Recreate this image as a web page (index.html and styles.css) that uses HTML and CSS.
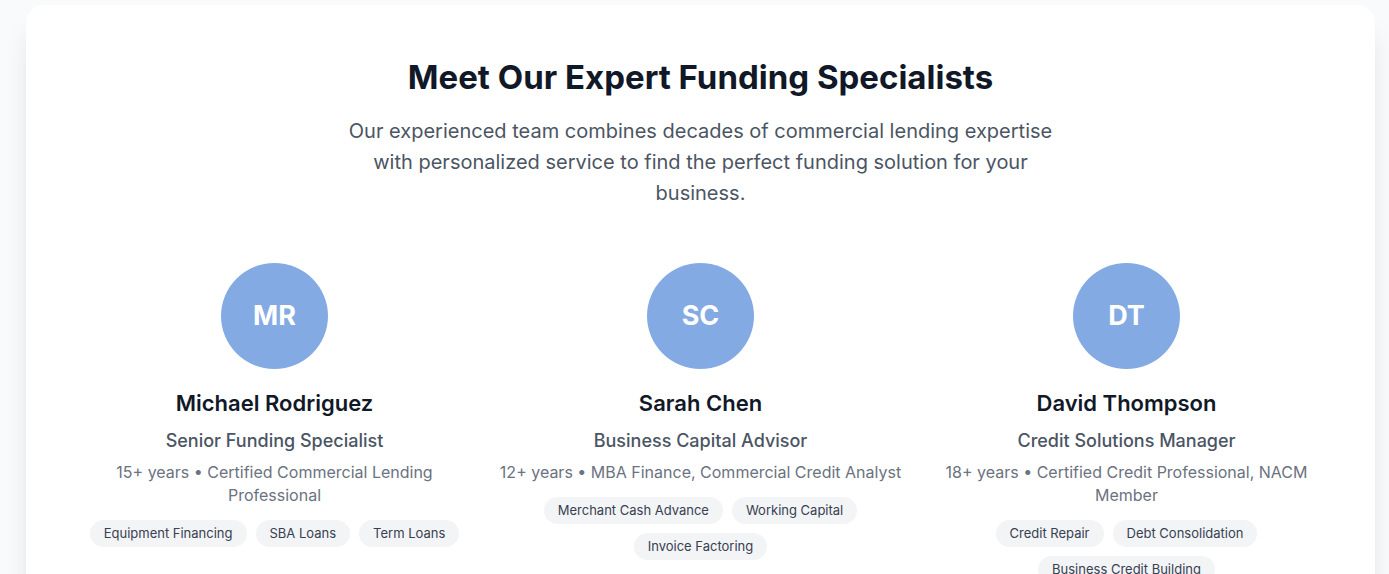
FILE: index.html
```html
<!DOCTYPE html>
<html lang="en">
<head>
<meta charset="utf-8">
<meta name="viewport" content="width=device-width, initial-scale=1">
<title>Meet Our Expert Funding Specialists</title>
<link rel="stylesheet" href="styles.css">
</head>
<body>
<main class="page">
  <section class="team">
    <header class="team-header">
      <h2 class="team-title">Meet Our Expert Funding Specialists</h2>
      <p class="team-intro">Our experienced team combines decades of commercial lending expertise with personalized service to find the perfect funding solution for your business.</p>
    </header>
    <div class="team-grid">
      <article class="member">
        <div class="avatar">MR</div>
        <h3 class="member-name">Michael Rodriguez</h3>
        <p class="member-role">Senior Funding Specialist</p>
        <p class="member-detail">15+ years • Certified Commercial Lending Professional</p>
        <ul class="tags">
          <li class="tag">Equipment Financing</li>
          <li class="tag">SBA Loans</li>
          <li class="tag">Term Loans</li>
        </ul>
      </article>
      <article class="member">
        <div class="avatar">SC</div>
        <h3 class="member-name">Sarah Chen</h3>
        <p class="member-role">Business Capital Advisor</p>
        <p class="member-detail">12+ years • MBA Finance, Commercial Credit Analyst</p>
        <ul class="tags">
          <li class="tag">Merchant Cash Advance</li>
          <li class="tag">Working Capital</li>
          <li class="tag">Invoice Factoring</li>
        </ul>
      </article>
      <article class="member">
        <div class="avatar">DT</div>
        <h3 class="member-name">David Thompson</h3>
        <p class="member-role">Credit Solutions Manager</p>
        <p class="member-detail">18+ years • Certified Credit Professional, NACM Member</p>
        <ul class="tags">
          <li class="tag">Credit Repair</li>
          <li class="tag">Debt Consolidation</li>
          <li class="tag">Business Credit Building</li>
        </ul>
      </article>
    </div>
  </section>
</main>
</body>
</html>
```
FILE: styles.css
```css
* {
  box-sizing: border-box;
  margin: 0;
  padding: 0;
}

html {
  scrollbar-width: none;
}

body {
  background: #f9fafb;
  color: #111827;
  font-family: Inter, "Liberation Sans", sans-serif;
}

.page {
  padding: 5px 14px 54px 26px;
}

.team {
  padding: 53px 47px;
  border-radius: 18px;
  background: #fff;
  box-shadow: 0 22px 28px -6px rgba(0, 0, 0, 0.12), 0 11px 11px -6px rgba(0, 0, 0, 0.04);
  text-align: center;
}

.team-header {
  margin-bottom: 54px;
}

.team-title {
  margin-bottom: 20px;
  font-size: 33px;
  font-weight: 700;
  line-height: 38px;
}

.team-intro {
  max-width: 747px;
  margin: 0 auto;
  color: #4b5563;
  font-size: 20px;
  line-height: 31px;
}

.team-grid {
  display: grid;
  grid-template-columns: repeat(3, minmax(0, 1fr));
  gap: 23px;
}

.avatar {
  display: flex;
  align-items: center;
  justify-content: center;
  width: 107px;
  height: 106px;
  margin: 0 auto 19px;
  border-radius: 50%;
  background: #84aae3;
  color: #fff;
  font-size: 27px;
  font-weight: 700;
  line-height: 36px;
}

.member-name {
  margin-bottom: 8px;
  font-size: 22px;
  font-weight: 600;
  line-height: 31px;
}

.member-role {
  margin-bottom: 7px;
  color: #4b5563;
  font-size: 18px;
  font-weight: 500;
  line-height: 27px;
}

.member-detail {
  margin-bottom: 13px;
  color: #6b7280;
  font-size: 16px;
  line-height: 23px;
}

.tags {
  display: flex;
  flex-wrap: wrap;
  justify-content: center;
  gap: 9px;
  list-style: none;
}

.tag {
  padding: 4px 14px 5px;
  border-radius: 14px;
  background: #f3f4f6;
  color: #374151;
  font-size: 13px;
  line-height: 18px;
}
```
